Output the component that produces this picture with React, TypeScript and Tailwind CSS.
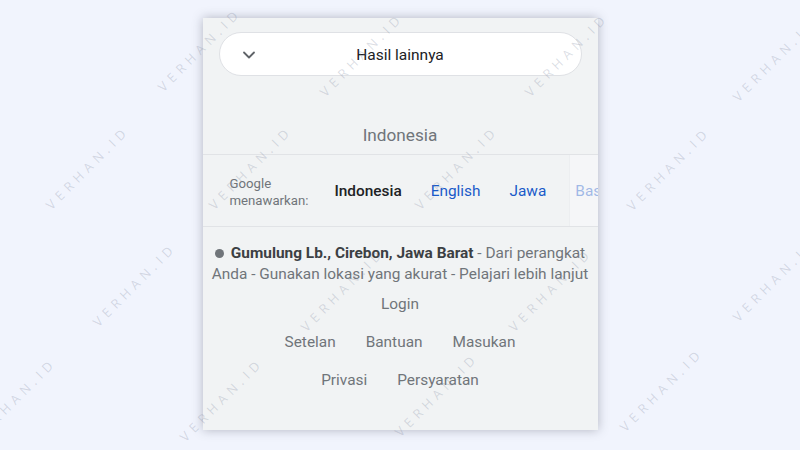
import React from 'react';
import { ChevronDown } from 'lucide-react';

const marks: [number, number][] = [
  [200, 50], [362, 55], [567, 55], [775, 60],
  [88, 168], [251, 168], [457, 168], [669, 169],
  [135, 285], [343, 290], [551, 290], [775, 280],
  [15, 400], [222, 400], [437, 395], [662, 390],
];

export default function App() {
  return (
    <div className="relative w-[800px] h-[450px] overflow-hidden bg-[#f1f4fd] font-['Roboto',sans-serif] flex justify-center pt-[18px]">
      {/* panel */}
      <div className="w-[395px] h-[412px] bg-[#f1f3f4] shadow-[0_0_10px_rgba(60,64,80,0.35)] flex flex-col">
        <div className="px-4 pt-[14px]">
          <div className="h-[44px] rounded-full bg-white border border-[#dfe1e5] grid grid-cols-[1fr_auto_1fr] items-center">
            <div className="pl-[19px] pt-[2px] text-[#5f6368]">
              <ChevronDown size={20} strokeWidth={2.2} />
            </div>
            <span className="text-[15.5px] pt-[3px] text-[#202124]">Hasil lainnya</span>
            <div />
          </div>
        </div>

        <div className="h-[79px] flex items-end justify-center pb-[9px] border-b border-[#e1e3e6]">
          <span className="text-[17.2px] leading-[20px] text-[#70757a]">Indonesia</span>
        </div>

        {/* language row */}
        <div className="relative h-[72px] flex items-center border-b border-[#e1e3e6] overflow-hidden whitespace-nowrap">
          <div className="pl-[27px] pr-[26px] text-[13.2px] leading-[17px] text-[#70757a] pt-[2px]">
            Google<br />menawarkan:
          </div>
          <div className="flex items-center gap-[29px] text-[15.4px] pt-[2px]">
            <span className="font-medium text-[#202124]">Indonesia</span>
            <span className="text-[#1a5ac9]">English</span>
            <span className="text-[#1a5ac9]">Jawa</span>
            <span className="text-[#1a5ac9]">Basa Sunda</span>
          </div>
          <div className="absolute right-0 top-0 bottom-0 w-[29px] bg-[#f8f9fa]/60 border-l border-[#eceef0]" />
        </div>

        {/* location */}
        <div className="pt-[16px] text-center text-[15.4px] leading-[21px] text-[#70757a] whitespace-nowrap">
          <div>
            <span className="inline-block w-[9px] h-[9px] rounded-full bg-[#70757a] mr-[7px] align-[0px]" />
            <span className="font-bold text-[#3c4043]">Gumulung Lb., Cirebon, Jawa Barat</span> - Dari perangkat
          </div>
          <div>Anda - Gunakan lokasi yang akurat - Pelajari lebih lanjut</div>
        </div>

        {/* footer links */}
        <div className="mt-[1px] flex flex-col text-[15.4px] text-[#70757a]">
          <div className="h-[38px] flex items-center justify-center">Login</div>
          <div className="h-[38px] flex items-center justify-center gap-[30px]">
            <span>Setelan</span>
            <span>Bantuan</span>
            <span>Masukan</span>
          </div>
          <div className="h-[38px] flex items-center justify-center gap-[30px]">
            <span>Privasi</span>
            <span>Persyaratan</span>
          </div>
        </div>
      </div>

      {/* watermark */}
      {marks.map(([x, y], i) => (
        <span
          key={i}
          className="absolute pointer-events-none -translate-x-1/2 -translate-y-1/2 -rotate-45 text-[13px] tracking-[0.38em] text-[rgba(130,138,160,0.28)] font-['Open_Sans',sans-serif] whitespace-nowrap"
          style={{ left: x, top: y }}
        >
          VERHAN.ID
        </span>
      ))}
    </div>
  );
}
